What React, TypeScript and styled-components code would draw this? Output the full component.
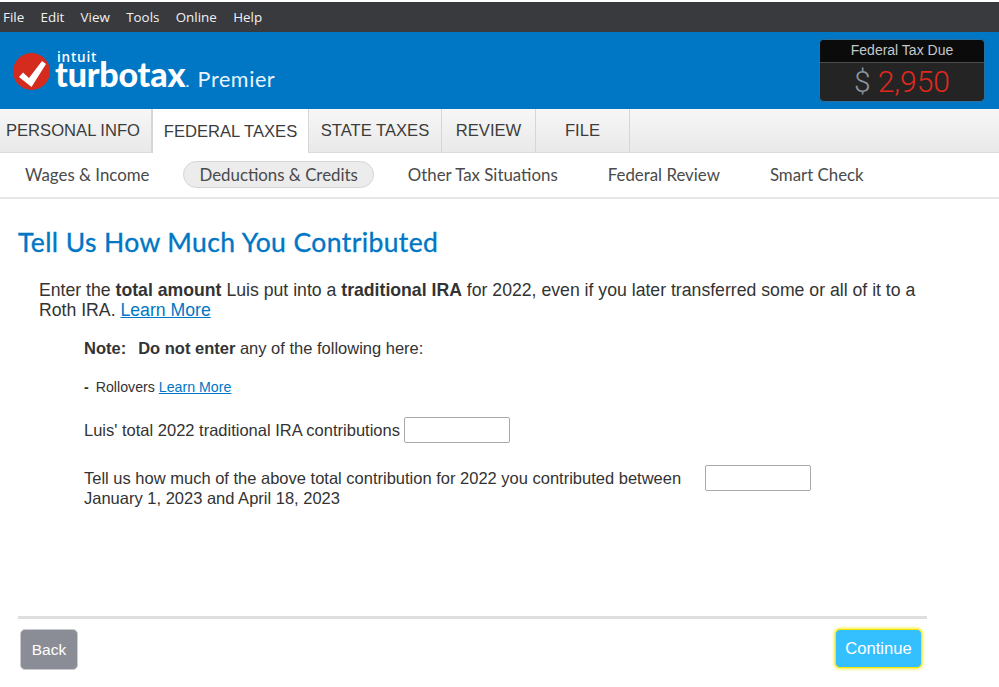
import React from "react";
import styled, { createGlobalStyle } from "styled-components";

const menuItems = ["File", "Edit", "View", "Tools", "Online", "Help"];
const tabs = [
  { label: "PERSONAL INFO", width: 152 },
  { label: "FEDERAL TAXES", width: 157, active: true },
  { label: "STATE TAXES", width: 133 },
  { label: "REVIEW", width: 94 },
  { label: "FILE", width: 94 },
];
const subItems = ["Wages & Income", "Deductions & Credits", "Other Tax Situations", "Federal Review", "Smart Check"];

const App = () => (
  <>
    <GlobalStyle />
    <Page>
      <MenuBar>
        {menuItems.map((m) => (
          <MenuItem key={m}>{m}</MenuItem>
        ))}
      </MenuBar>
      <Header>
        <Brand>
          <CheckBadge viewBox="0 0 37 37">
            <circle cx="18.5" cy="18.5" r="18.5" fill="#d52b1e" />
            <path d="M6 24l4-4.5 6 5.5L29 8l4 3-14.5 23z" fill="#fff" />
          </CheckBadge>
          <BrandText>
            <Intuit>intuit</Intuit>
            <BrandLine>
              <Turbotax>turbotax</Turbotax>
              <Dot>.</Dot>
              <Premier>Premier</Premier>
            </BrandLine>
          </BrandText>
        </Brand>
        <TaxBox>
          <TaxTitle>Federal Tax Due</TaxTitle>
          <TaxValue>
            <Dollar>$</Dollar>
            <Amount>2,950</Amount>
          </TaxValue>
        </TaxBox>
      </Header>
      <TabBar>
        {tabs.map((t) => (
          <Tab key={t.label} $width={t.width} $active={t.active}>
            {t.label}
          </Tab>
        ))}
      </TabBar>
      <SubNav>
        {subItems.map((s, i) => (
          <SubItem key={s} $active={i === 1}>
            {s}
          </SubItem>
        ))}
      </SubNav>
      <Main>
        <Title>Tell Us How Much You Contributed</Title>
        <Intro>
          Enter the <b>total amount</b> Luis put into a <b>traditional IRA</b> for 2022, even if you later
          transferred some or all of it to a Roth IRA. <IntroLink href="#">Learn More</IntroLink>
        </Intro>
        <Details>
          <Note>
            <NoteLead>Note:</NoteLead>
            <b>Do not enter</b> any of the following here:
          </Note>
          <Bullet>
            <b>-</b>
            <span>
              Rollovers <SmallLink href="#">Learn More</SmallLink>
            </span>
          </Bullet>
          <FirstField>
            <span>Luis' total 2022 traditional IRA contributions</span>
            <AmountInput />
          </FirstField>
          <SecondField>
            <FieldLabel>
              Tell us how much of the above total contribution for 2022 you contributed between January 1, 2023
              and April 18, 2023
            </FieldLabel>
            <AmountInput />
          </SecondField>
        </Details>
      </Main>
      <Footer>
        <BackButton>Back</BackButton>
        <ContinueButton>Continue</ContinueButton>
      </Footer>
    </Page>
  </>
);

export default App;

const GlobalStyle = createGlobalStyle`
  html, body {
    margin: 0;
    padding: 0;
    background: #fff;
  }
  body {
    font-family: "Liberation Sans", Arial, sans-serif;
    color: #333;
  }
`;

const Page = styled.div`
  width: 999px;
  height: 687px;
  padding-top: 2px;
  box-sizing: border-box;
  overflow: hidden;
  display: flex;
  flex-direction: column;
`;

const MenuBar = styled.div`
  height: 30px;
  background: #393a3e;
  display: flex;
  align-items: center;
  padding-left: 3px;
  gap: 16.3px;
`;

const MenuItem = styled.span`
  font-family: "Open Sans", "Noto Sans", sans-serif;
  font-size: 13.4px;
  color: #f1f1f1;
`;

const Header = styled.div`
  height: 77px;
  background: #0077c5;
  display: flex;
  justify-content: space-between;
  align-items: flex-start;
  padding: 7px 14px 0 13px;
  box-sizing: border-box;
`;

const Brand = styled.div`
  display: flex;
  align-items: flex-start;
  margin-top: 14px;
`;

const CheckBadge = styled.svg`
  width: 37px;
  height: 37px;
  margin-right: 5px;
`;

const BrandText = styled.div`
  display: flex;
  flex-direction: column;
  color: #fff;
  margin-top: -1px;
`;

const Intuit = styled.span`
  font-family: "Open Sans", sans-serif;
  font-size: 13.5px;
  font-weight: 600;
  line-height: 11px;
  letter-spacing: 0.8px;
  margin-left: 2px;
`;

const BrandLine = styled.div`
  display: flex;
  align-items: baseline;
  line-height: 30px;
  margin-top: -4px;
`;

const Turbotax = styled.span`
  font-family: "Lato", sans-serif;
  font-size: 34px;
  font-weight: 900;
  letter-spacing: -0.2px;
`;

const Dot = styled.span`
  font-family: "Lato", sans-serif;
  font-size: 18px;
  color: #cfe4f4;
  margin-right: 8px;
`;

const Premier = styled.span`
  font-family: "Lato", sans-serif;
  font-size: 21.5px;
  letter-spacing: 0.6px;
  color: #eaf4fb;
`;

const TaxBox = styled.div`
  width: 166px;
  height: 63px;
  box-sizing: border-box;
  border: 1px solid #2a6f9e;
  border-radius: 5px;
  overflow: hidden;
  display: flex;
  flex-direction: column;
  background: #242424;
`;

const TaxTitle = styled.div`
  height: 23px;
  box-sizing: border-box;
  background: #0b0b0b;
  border-bottom: 1px solid #4c4c4c;
  color: #c4c8cc;
  font-size: 14px;
  text-align: center;
  line-height: 21px;
`;

const TaxValue = styled.div`
  flex: 1;
  display: flex;
  align-items: center;
  justify-content: center;
  gap: 7px;
  font-family: "Roboto", sans-serif;
  font-weight: 300;
  font-size: 30px;
  padding-bottom: 1px;
`;

const Dollar = styled.span`
  color: #8d96a0;
`;

const Amount = styled.span`
  color: #e0281e;
`;

const TabBar = styled.div`
  height: 44px;
  display: flex;
  background: linear-gradient(#f7f7f7, #e9e9e9);
  border-bottom: 1px solid #dcdcdc;
  box-sizing: border-box;
`;

const Tab = styled.div<{ $width: number; $active?: boolean }>`
  width: ${(p) => p.$width}px;
  box-sizing: border-box;
  display: flex;
  align-items: center;
  justify-content: center;
  font-size: 16.6px;
  color: #3c3c3c;
  border-right: 1px solid #d6d6d6;
  background: ${(p) => (p.$active ? "#fff" : "transparent")};
  ${(p) => (p.$active ? "height: 44px; border-left: 1px solid #d6d6d6; padding-top: 1px;" : "")}
  &:first-child {
    padding-right: 5px;
  }
`;

const SubNav = styled.div`
  height: 46px;
  box-sizing: border-box;
  border-bottom: 2px solid #e6e6e6;
  display: flex;
  align-items: center;
  padding: 0 0 2px 9px;
`;

const SubItem = styled.div<{ $active?: boolean }>`
  font-family: "Lato", sans-serif;
  font-size: 16.85px;
  color: #4a4a4a;
  height: 27px;
  line-height: 25px;
  box-sizing: border-box;
  padding: 0 15px;
  margin-right: 18px;
  border-radius: 14px;
  border: 1px solid ${(p) => (p.$active ? "#d4d4d4" : "transparent")};
  background: ${(p) => (p.$active ? "#ececec" : "transparent")};
`;

const Main = styled.div`
  flex: 1;
  padding: 27px 0 0 18px;
`;

const Title = styled.h1`
  font-family: "Lato", sans-serif;
  font-size: 26.5px;
  font-weight: 400;
  -webkit-text-stroke: 0.35px #0077c5;
  line-height: 32px;
  letter-spacing: 0.4px;
  color: #0077c5;
  margin: 0 0 22px;
`;

const Intro = styled.p`
  margin: 0 0 0 21px;
  width: 880px;
  font-size: 17.66px;
  line-height: 20px;
  color: #333;
`;

const IntroLink = styled.a`
  color: #0077c5;
`;

const Details = styled.div`
  margin: 18px 0 0 66px;
  font-size: 16.5px;
  line-height: 20px;
`;

const Note = styled.div``;

const NoteLead = styled.b`
  margin-right: 12px;
`;

const Bullet = styled.div`
  margin-top: 19px;
  display: flex;
  gap: 7px;
  font-size: 14.2px;
`;

const SmallLink = styled.a`
  color: #0077c5;
`;

const FirstField = styled.div`
  margin-top: 20px;
  display: flex;
  align-items: center;
  gap: 4px;
`;

const SecondField = styled.div`
  margin-top: 22px;
  display: flex;
  align-items: flex-start;
  gap: 21px;
`;

const FieldLabel = styled.div`
  width: 600px;
  margin-top: 3px;
`;

const AmountInput = styled.input`
  width: 106px;
  height: 26px;
  box-sizing: border-box;
  border: 1px solid #a9a9a9;
  border-radius: 2px;
  background: #fff;
  outline: none;
`;

const Footer = styled.div`
  width: 909px;
  height: 71px;
  margin-left: 18px;
  box-sizing: border-box;
  border-top: 3px solid #dedede;
  display: flex;
  justify-content: space-between;
  align-items: flex-start;
  padding: 10px 5px 0 2px;
`;

const BackButton = styled.button`
  width: 58px;
  height: 41px;
  border: 1px solid #c9cbd0;
  border-radius: 5px;
  background: #8a8d95;
  color: #fff;
  font: 15.5px "Liberation Sans", Arial, sans-serif;
  padding: 0;
`;

const ContinueButton = styled.button`
  width: 87px;
  height: 39px;
  border: 1px solid #f5e800;
  border-radius: 5px;
  background: #34bfff;
  color: #fff;
  font: 16.6px "Liberation Sans", Arial, sans-serif;
  padding: 0;
  box-shadow: 0 0 3px 1px #f8ec30;
`;
